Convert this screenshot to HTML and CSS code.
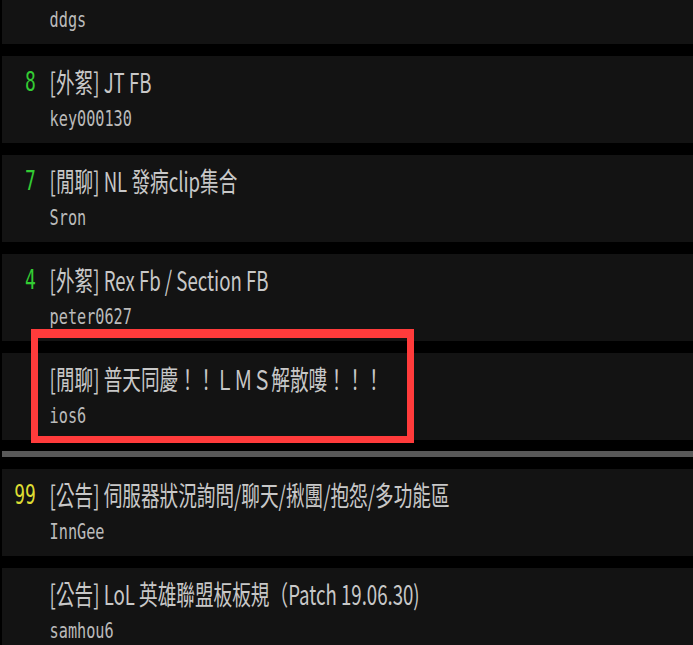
FILE: index.html
```html
<!DOCTYPE html>
<html lang="zh-Hant">
  <head>
    <meta charset="UTF-8" />
    <meta name="viewport" content="width=device-width, initial-scale=1.0" />
    <title>LoL 看板</title>
    <link rel="stylesheet" href="styles.css">
  </head>
  <body>
    <div class="r-list-container">
      <div class="r-ent">
        <div class="r-ent-body">
          <div class="nrec"></div>
          <div class="r-ent-text">
            <div class="title"></div>
            <div class="author">ddgs</div>
          </div>
        </div>
      </div>

      <div class="r-ent">
        <div class="r-ent-body">
          <div class="nrec f2">8</div>
          <div class="r-ent-text">
            <div class="title">[外絮] JT FB</div>
            <div class="author">key000130</div>
          </div>
        </div>
      </div>

      <div class="r-ent">
        <div class="r-ent-body">
          <div class="nrec f2">7</div>
          <div class="r-ent-text">
            <div class="title">[閒聊] NL 發病clip集合</div>
            <div class="author">Sron</div>
          </div>
        </div>
      </div>

      <div class="r-ent">
        <div class="r-ent-body">
          <div class="nrec f2">4</div>
          <div class="r-ent-text">
            <div class="title">[外絮] Rex Fb / Section FB</div>
            <div class="author">peter0627</div>
          </div>
        </div>
      </div>

      <div class="r-ent marked">
        <div class="r-ent-body">
          <div class="nrec"></div>
          <div class="r-ent-text">
            <div class="title">[閒聊] 普天同慶！！ＬＭＳ解散嘍！！！</div>
            <div class="author">ios6</div>
          </div>
        </div>
        <div class="highlight-box"></div>
      </div>

      <div class="r-list-sep"></div>

      <div class="r-ent">
        <div class="r-ent-body">
          <div class="nrec f3">99</div>
          <div class="r-ent-text">
            <div class="title">[公告] 伺服器狀況詢問/聊天/揪團/抱怨/多功能區</div>
            <div class="author">InnGee</div>
          </div>
        </div>
      </div>

      <div class="r-ent">
        <div class="r-ent-body">
          <div class="nrec"></div>
          <div class="r-ent-text">
            <div class="title">[公告] LoL 英雄聯盟板板規（Patch 19.06.30)</div>
            <div class="author">samhou6</div>
          </div>
        </div>
      </div>
    </div>
  </body>
</html>
```

FILE: styles.css
```css
* {
  margin: 0;
  padding: 0;
  box-sizing: border-box;
}

body {
  background-color: #000;
  font-family: "Noto Sans CJK TC", "Noto Sans", sans-serif;
  overflow: hidden;
}

.r-list-container {
  margin-top: -43px;
  padding-left: 2px;
}

.r-ent {
  position: relative;
  height: 87px;
  margin-bottom: 12px;
  background-color: #131313;
}

/* the old screenshot is squeezed sideways, so the row text is too */
.r-ent-body {
  display: flex;
  padding-top: 9.5px;
  transform: scaleX(0.69);
  transform-origin: left top;
  white-space: nowrap;
}

.nrec {
  width: 49px;
  flex-shrink: 0;
  text-align: right;
  font-family: "DejaVu Sans Mono", monospace;
  font-size: 26px;
  line-height: 32px;
}

.nrec.f2 {
  color: #33cc33;
}

.nrec.f3 {
  color: #dddd33;
}

.r-ent-text {
  padding-left: 20px;
}

.title {
  height: 32px;
  font-size: 27px;
  line-height: 32px;
  color: #c8c8c8;
}

.author {
  margin-top: 3px;
  font-family: "DejaVu Sans Mono", monospace;
  font-size: 22px;
  line-height: 36px;
  color: #bbb;
}

.r-list-sep {
  height: 6px;
  margin: -1px 0 12px;
  background-color: #595959;
}

.highlight-box {
  position: absolute;
  top: -24px;
  left: 29px;
  width: 383px;
  height: 114px;
  border: 7px solid #ff3b3b;
  border-top-width: 9px;
}
```
